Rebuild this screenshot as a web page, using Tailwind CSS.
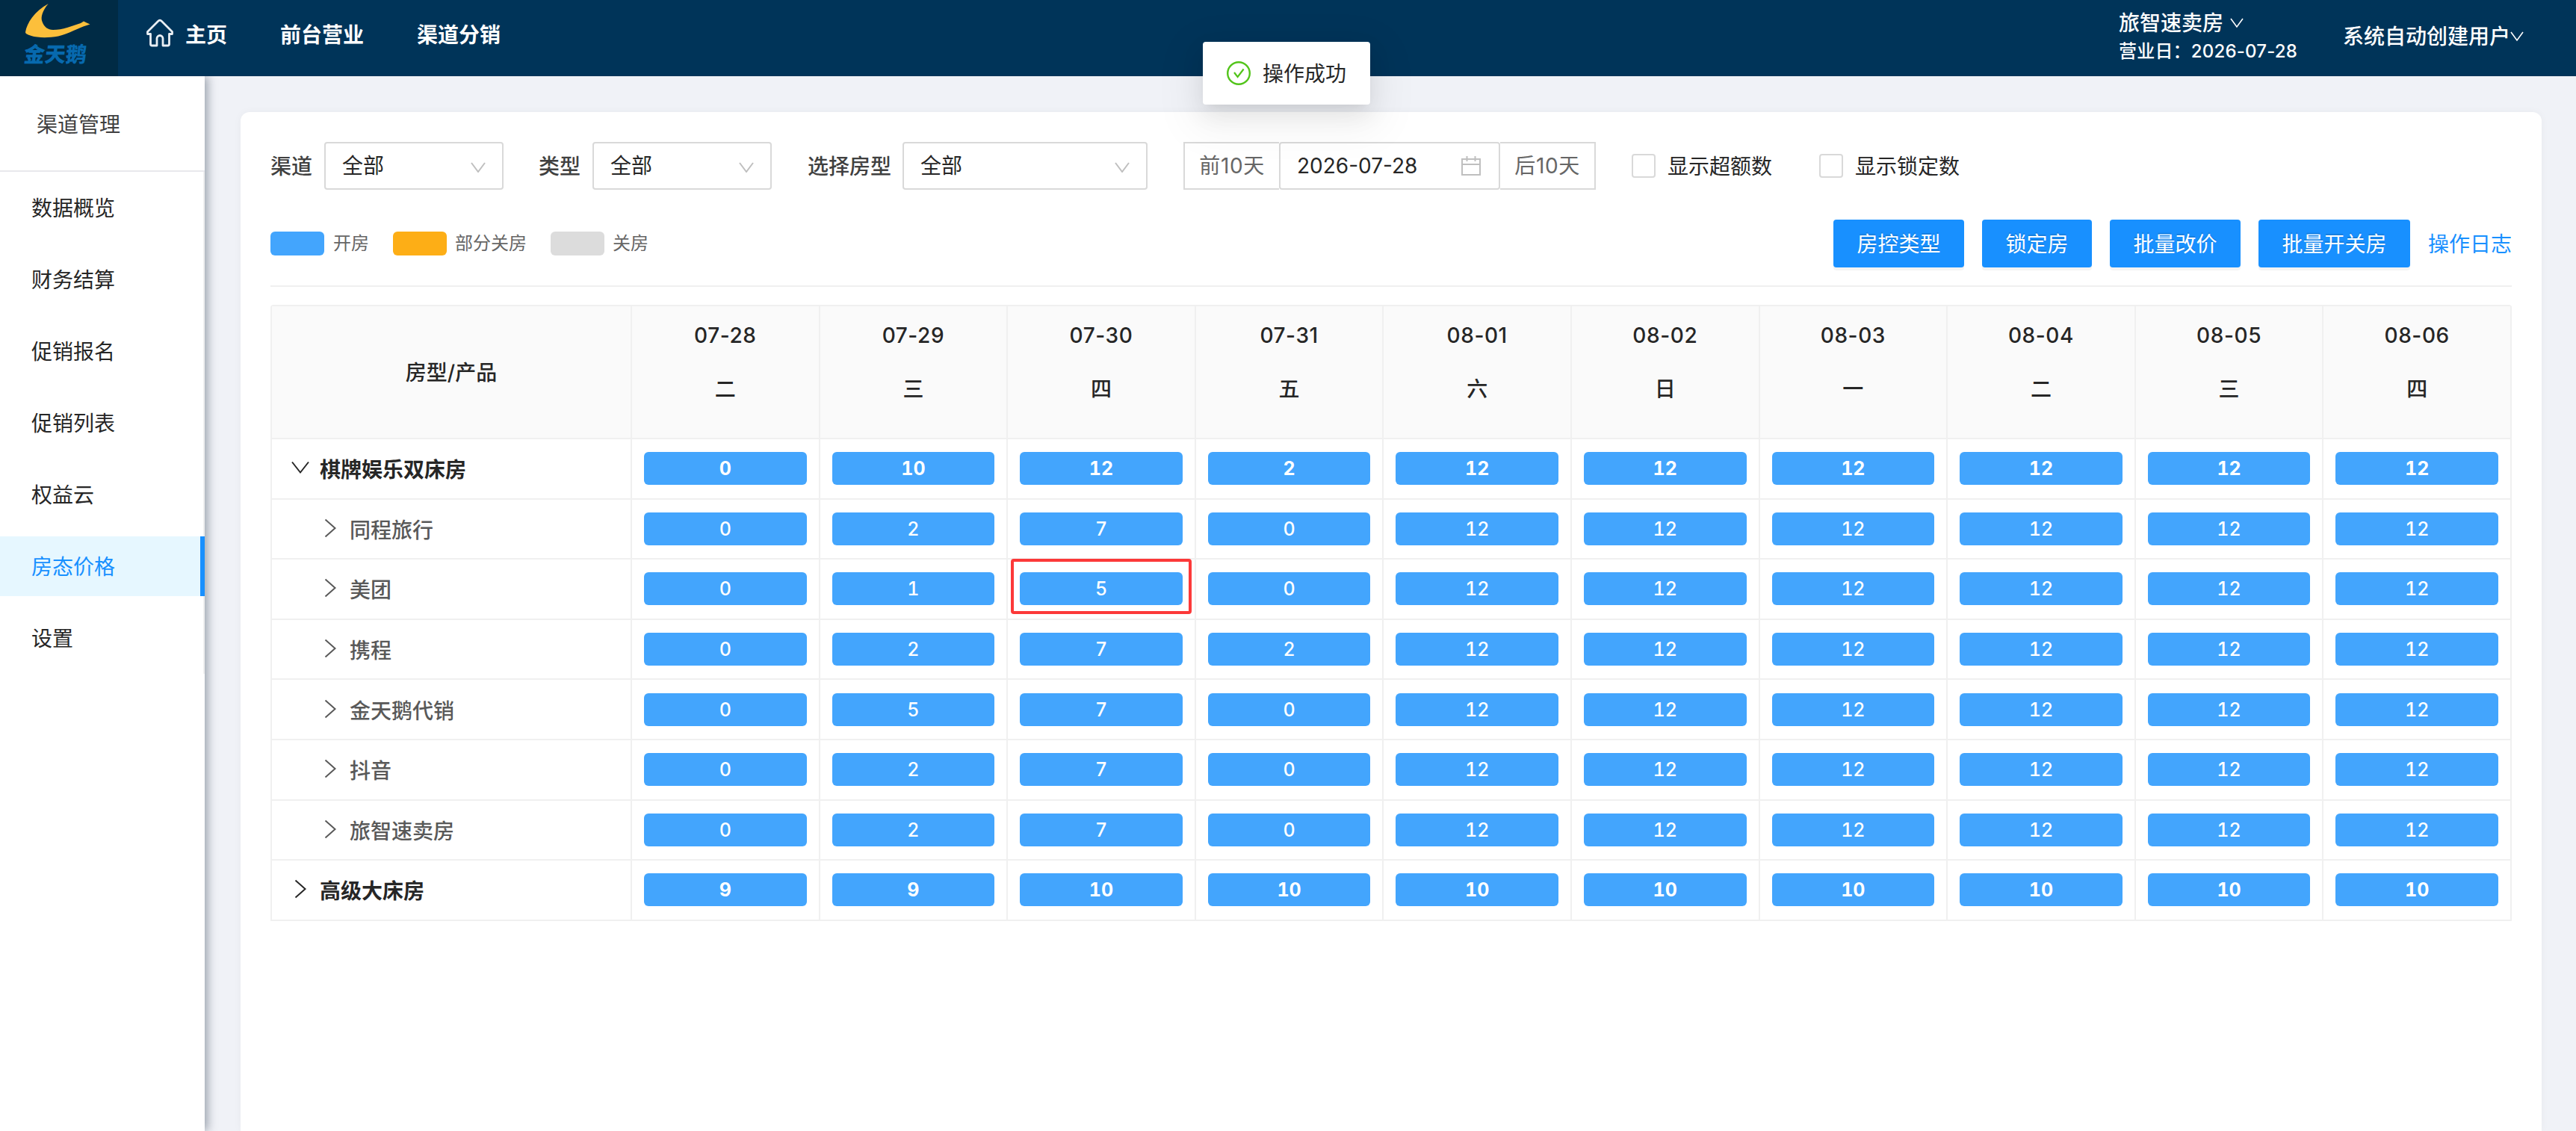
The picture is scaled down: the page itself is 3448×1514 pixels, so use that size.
<!DOCTYPE html>
<html lang="zh-CN">
  <head>
    <meta charset="UTF-8">
    <meta name="viewport" content="width=device-width, initial-scale=1.0">
    <script src="https://cdn.jsdelivr.net/npm/@tailwindcss/browser@4"></script>
    <title>房态价格</title>
  </head>
  <body class="h-screen overflow-hidden flex flex-col bg-[#f0f2f7] font-['Inter','Noto_Sans_CJK_SC',sans-serif] text-[28px] leading-[44px] text-[#262626]">
    <!-- Top bar -->
    <header class="relative z-10 h-[102px] shrink-0 flex items-center bg-[#003459] text-white">
      <div class="w-[158px] h-full shrink-0 bg-[#002b45]">
        <svg class="w-[88px] h-[47px] ml-[34px] mt-[5px]" viewBox="0 0 88 47">
          <path d="M30.700 0C23 9 20 18 22.500 24C25 31 30 35 37 35C50 35 62 30 74 26L78 23.500L82 25.500L86.500 27.500L82 29C72 32 58 40 44 43.500C30 46 16 45.500 8 43C2 41 0 40 0 38C2 26 12 10 30.700 0z" fill="#fcbf3b" />
        </svg>
        <div class="ml-[32px] mt-[3px] text-[28px] leading-[36px] font-black text-[#0769ae] -skew-x-6">金天鹅</div>
      </div>
      <nav class="flex items-center pl-[37px] pb-[8px] font-bold">
        <svg class="w-[38px] h-[38px] mr-[15px] -mt-[6px]" viewBox="0 0 38 38" fill="none" stroke="#e9eef3" stroke-width="2.800" stroke-linejoin="round">
          <path d="M17 3L2.500 17.500v3h4V34a2 2 0 0 0 2 2H15v-9.500a4 4 0 0 1 8 0V36h6.500a2 2 0 0 0 2-2V20.500h4v-3L21 3a3 3 0 0 0-4 0z" />
        </svg>
        <a class="mr-[71px]">主页</a>
        <a class="mr-[71px]">前台营业</a>
        <a>渠道分销</a>
      </nav>
      <div class="ml-auto flex items-center pr-[70px] pb-[4px] font-medium">
        <div class="w-[300px]">
          <div class="flex items-center leading-[40px]">旅智速卖房
            <svg class="ml-[9px] w-[18px] h-[14px]" viewBox="0 0 18 14" fill="none" stroke="#fff" stroke-width="1.6"><path d="M1 1l8 11l8-11" /></svg>
          </div>
          <div class="text-[24px] leading-[36px] tracking-[0.2px]">营业日：2026-07-28</div>
        </div>
        <div class="flex items-center">系统自动创建用户
          <svg class="w-[18px] h-[14px]" viewBox="0 0 18 14" fill="none" stroke="#fff" stroke-width="1.6"><path d="M1 1l8 11l8-11" /></svg>
        </div>
      </div>
    </header>

    <!-- Success message -->
    <div class="absolute z-20 left-[1610px] top-[56px] w-[224px] h-[84px] px-8 flex items-center gap-4 rounded-[4px] bg-white shadow-[0_6px_12px_-8px_rgba(0,0,0,0.12),0_12px_32px_rgba(0,0,0,0.08),0_18px_56px_16px_rgba(0,0,0,0.05)]">
      <svg class="w-8 h-8 shrink-0" viewBox="0 0 32 32" fill="none" stroke="#52c41a">
        <circle cx="16" cy="16" r="14.8" stroke-width="2.4" />
        <path d="M10 15l4.600 6l8-10.500" stroke-width="2.200" />
      </svg>
      <span class="shrink-0 pt-px">操作成功</span>
    </div>

    <div class="flex flex-1 min-h-0">
      <!-- Side menu -->
      <aside class="w-[274px] shrink-0 bg-white shadow-[4px_0_12px_rgba(0,21,41,0.35)]">
        <div class="h-[128px] pl-[49px] pt-[4px] flex items-center border-b-2 border-[#e8e8ec] text-[#404040]">渠道管理</div>
        <ul id="menu" class="py-2 flex flex-col gap-4 border-r-2 border-[#f0f0f0]"></ul>
      </aside>

      <main class="flex-1 pl-[48px] pr-[46px] pt-[48px]">
        <div class="h-full px-[40px] pt-[40px] bg-white rounded-t-[12px] shadow-[0_0_12px_rgba(0,0,0,0.04)]">
          <!-- Filters -->
          <div class="flex items-center h-[64px]">
            <span class="font-medium text-[#404040] mr-[16px] pt-px">渠道</span>
            <div class="w-[240px] h-[64px] pl-[22px] pr-[22px] flex items-center justify-between border-2 border-[#d9d9d9] rounded-[4px]">全部
              <svg class="mt-[4px] w-[20px] h-[14px]" viewBox="0 0 20 14" fill="none" stroke="#bfbfbf" stroke-width="2"><path d="M1 1l9 12l9-12" /></svg>
            </div>
            <span class="font-medium text-[#404040] ml-[47px] mr-[16px] pt-px">类型</span>
            <div class="w-[240px] h-[64px] pl-[22px] pr-[22px] flex items-center justify-between border-2 border-[#d9d9d9] rounded-[4px]">全部
              <svg class="mt-[4px] w-[20px] h-[14px]" viewBox="0 0 20 14" fill="none" stroke="#bfbfbf" stroke-width="2"><path d="M1 1l9 12l9-12" /></svg>
            </div>
            <span class="font-medium text-[#404040] ml-[48px] mr-[15px] pt-px">选择房型</span>
            <div class="w-[328px] h-[64px] pl-[22px] pr-[22px] flex items-center justify-between border-2 border-[#d9d9d9] rounded-[4px]">全部
              <svg class="mt-[4px] w-[20px] h-[14px]" viewBox="0 0 20 14" fill="none" stroke="#bfbfbf" stroke-width="2"><path d="M1 1l9 12l9-12" /></svg>
            </div>
            <div class="ml-[48px] w-[128px] h-[64px] flex items-center justify-center border-2 border-r-0 border-[#d9d9d9] text-[#666] tracking-[0.6px]">前10天</div>
            <div class="w-[296px] h-[64px] pl-[22px] pr-[24px] flex items-center justify-between border-2 border-[#d9d9d9] rounded-[4px]">
              <span>2026-07-28</span>
              <svg class="w-[26px] h-[26px]" viewBox="0 0 26 26" fill="none" stroke="#bfbfbf" stroke-width="2"><path d="M1 4h24v21H1zM1 11h24M7.500 0v7M18.500 0v7" /></svg>
            </div>
            <div class="w-[128px] h-[64px] flex items-center justify-center border-2 border-l-0 border-[#d9d9d9] text-[#666] tracking-[0.6px]">后10天</div>
            <span class="ml-[48px] w-8 h-8 border-2 border-[#d9d9d9] rounded-[4px]"></span>
            <span class="ml-[16px] pt-px">显示超额数</span>
            <span class="ml-[63px] w-8 h-8 border-2 border-[#d9d9d9] rounded-[4px]"></span>
            <span class="ml-[16px] pt-px">显示锁定数</span>
          </div>

          <!-- Legend and actions -->
          <div class="mt-[40px] flex items-center h-[64px]">
            <div class="flex items-center text-[24px] text-[#666]">
              <span class="w-[72px] h-[32px] rounded-[6px] bg-[#43a5fd] mr-[12px]"></span>开房
              <span class="w-[72px] h-[32px] rounded-[6px] bg-[#fdae16] ml-[32px] mr-[11px]"></span>部分关房
              <span class="w-[72px] h-[32px] rounded-[6px] bg-[#dcdcdc] ml-[32px] mr-[11px]"></span>关房
            </div>
            <div class="ml-auto flex items-center gap-[24px]">
              <button class="h-[64px] px-[31.5px] pt-px rounded-[4px] bg-[#1890ff] text-white shadow-[0_4px_0_rgba(0,0,0,0.045)] text-shadow-[0_-2px_0_rgba(0,0,0,0.12)]">房控类型</button>
              <button class="h-[64px] px-[31.5px] pt-px rounded-[4px] bg-[#1890ff] text-white shadow-[0_4px_0_rgba(0,0,0,0.045)] text-shadow-[0_-2px_0_rgba(0,0,0,0.12)]">锁定房</button>
              <button class="h-[64px] px-[31.5px] pt-px rounded-[4px] bg-[#1890ff] text-white shadow-[0_4px_0_rgba(0,0,0,0.045)] text-shadow-[0_-2px_0_rgba(0,0,0,0.12)]">批量改价</button>
              <button class="h-[64px] px-[31.5px] pt-px rounded-[4px] bg-[#1890ff] text-white shadow-[0_4px_0_rgba(0,0,0,0.045)] text-shadow-[0_-2px_0_rgba(0,0,0,0.12)]">批量开关房</button>
              <a class="text-[#1890ff] pt-px">操作日志</a>
            </div>
          </div>

          <div class="mt-[24px] mb-[24px] h-[2px] bg-[#f0f0f0]"></div>

          <!-- Room table -->
          <div id="table" class="border-t-2 border-l-2 border-[#f0f0f0] rounded-t-[4px]">
            <div id="head" class="grid grid-cols-[482px_repeat(10,251.6px)] h-[178px] bg-[#fafafa] font-medium text-center"></div>
          </div>
        </div>
      </main>
    </div>

    <script>
      // Side menu
      const menu = document.querySelector("#menu");
      const items = ["数据概览", "财务结算", "促销报名", "促销列表", "权益云", "房态价格", "设置"];
      items.forEach((name) => {
        const active = name === "房态价格";
        menu.innerHTML += `<li class="h-[80px] pl-[42px] pt-[2px] flex items-center ${active ? "-mr-[2px] bg-[#e6f7ff] text-[#1890ff] border-r-[6px] border-[#1890ff]" : ""}">${name}</li>`;
      });

      // Table head
      const days = [
        ["07-28", "二"], ["07-29", "三"], ["07-30", "四"], ["07-31", "五"], ["08-01", "六"],
        ["08-02", "日"], ["08-03", "一"], ["08-04", "二"], ["08-05", "三"], ["08-06", "四"],
      ];
      const head = document.querySelector("#head");
      head.innerHTML = `<div class="pt-[2px] border-r-2 border-b-2 border-[#f0f0f0] flex items-center justify-center">房型/产品</div>`;
      days.forEach(([date, week]) => {
        head.innerHTML += `
          <div class="pt-[17px] border-r-2 border-b-2 border-[#f0f0f0]">
            <div class="h-[72px] tracking-[0.6px]">${date}</div>
            <div>${week}</div>
          </div>`;
      });

      // Table rows
      const rows = [
        { name: "棋牌娱乐双床房", top: true, open: true, nums: [0, 10, 12, 2, 12, 12, 12, 12, 12, 12] },
        { name: "同程旅行", nums: [0, 2, 7, 0, 12, 12, 12, 12, 12, 12] },
        { name: "美团", nums: [0, 1, 5, 0, 12, 12, 12, 12, 12, 12], mark: 2 },
        { name: "携程", nums: [0, 2, 7, 2, 12, 12, 12, 12, 12, 12] },
        { name: "金天鹅代销", nums: [0, 5, 7, 0, 12, 12, 12, 12, 12, 12] },
        { name: "抖音", nums: [0, 2, 7, 0, 12, 12, 12, 12, 12, 12] },
        { name: "旅智速卖房", nums: [0, 2, 7, 0, 12, 12, 12, 12, 12, 12] },
        { name: "高级大床房", top: true, nums: [9, 9, 10, 10, 10, 10, 10, 10, 10, 10] },
      ];
      const right = `<svg class="w-[24px] h-[26px] mr-[14px] mb-[6px]" viewBox="0 0 24 26" fill="none" stroke="currentColor" stroke-width="2"><path d="M5.500 1.500l13 11.500l-13 11.500" /></svg>`;
      const down = `<svg class="w-[24px] h-[26px] mr-[14px] mb-[6px]" viewBox="0 0 24 26" fill="none" stroke="currentColor" stroke-width="2"><path d="M1 5.500l11 14l11-14" /></svg>`;
      const table = document.querySelector("#table");
      rows.forEach((row) => {
        let html = `<div class="pt-[4px] flex items-center border-r-2 border-b-2 border-[#f0f0f0] ${row.top ? "pl-[26px] font-bold" : "pl-[66px] text-[#595959]"}">${row.open ? down : right}${row.name}</div>`;
        row.nums.forEach((num, i) => {
          const mark = row.mark === i ? `<i class="absolute left-[4px] -top-[1px] w-[242px] h-[74px] border-4 border-[#fc3939] rounded-[4px]"></i>` : "";
          html += `
            <div class="relative px-[16px] flex items-center border-r-2 border-b-2 border-[#f0f0f0]">
              <div class="w-full h-[44px] rounded-[6px] bg-[#43a5fd] text-white text-center text-[25px] leading-[44px] tabular-nums">${num}</div>${mark}
            </div>`;
        });
        table.innerHTML += `<div class="grid grid-cols-[482px_repeat(10,251.6px)] h-[80.6px] ${row.top ? "font-bold" : "font-medium"}">${html}</div>`;
      });
    </script>
  </body>
</html>
